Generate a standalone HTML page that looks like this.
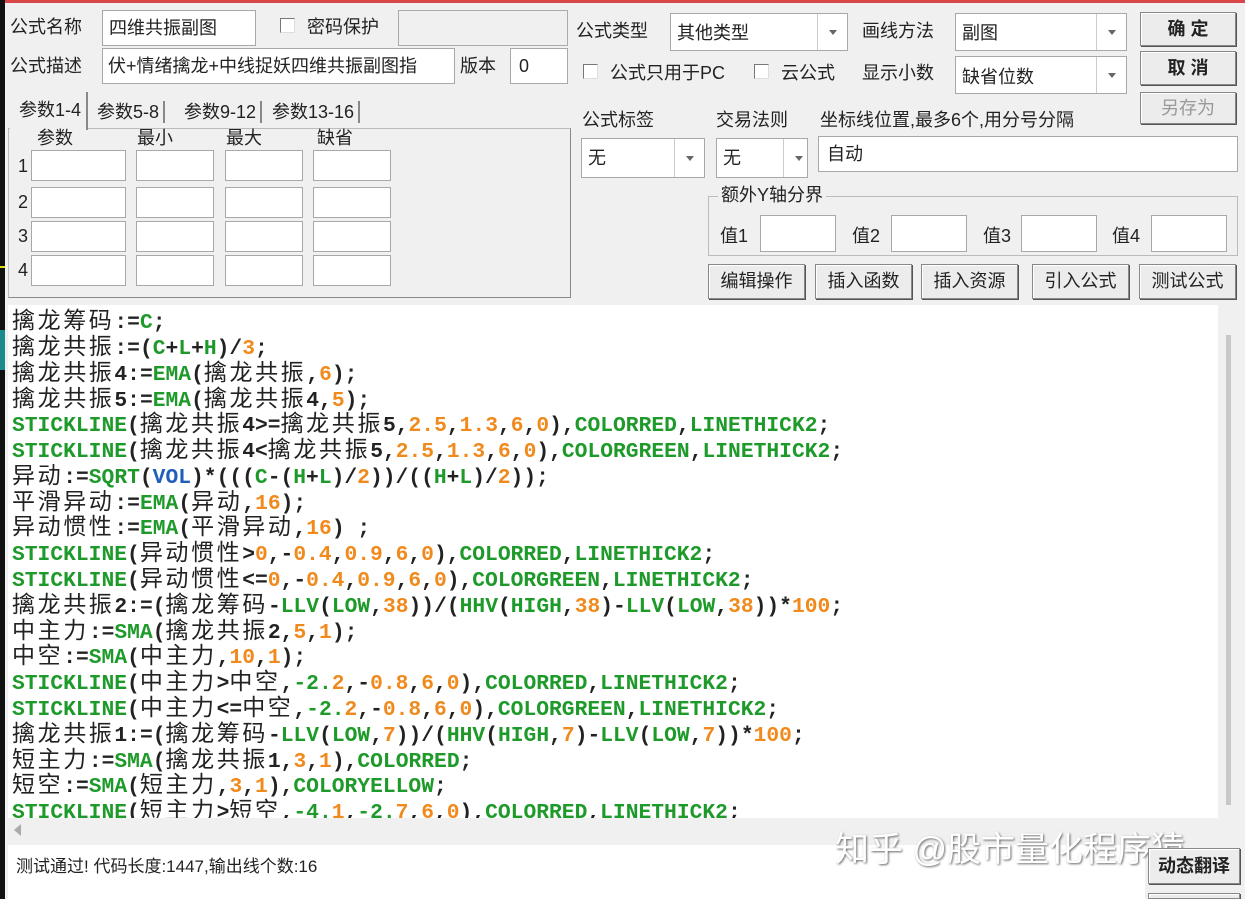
<!DOCTYPE html>
<html><head><meta charset="utf-8"><style>
*{margin:0;padding:0;box-sizing:border-box}
html,body{width:1245px;height:899px;overflow:hidden}
body{background:#f0f0f0;position:relative;font-family:"Liberation Sans","Noto Sans CJK SC",sans-serif;font-size:18px;color:#222}
.a{position:absolute}
.in{position:absolute;background:#fff;border:1px solid #a8a8a8;}
.lbl{position:absolute;font-size:18px;line-height:22px;white-space:nowrap}
.cb{position:absolute;width:15px;height:15px;background:#fff;border:1px solid #777;border-right-color:#ddd;border-bottom-color:#ddd}
.dd{position:absolute;right:0;top:0;bottom:0;width:30px;border-left:1px solid #ccc;}
.dd:after{content:"";position:absolute;left:11px;top:50%;margin-top:-2px;border:4px solid transparent;border-top:5px solid #666;}
.btn{position:absolute;background:#ececec;border:1px solid #888;box-shadow:inset 1px 1px #fff,1px 1px #555;text-align:center;font-size:18px}
#code{position:absolute;left:8px;top:305px;width:1210px;height:513px;background:#fff;overflow:hidden}
.l{position:absolute;left:4px;height:26px;line-height:26px;white-space:pre;font-family:"Liberation Mono",monospace;font-weight:bold;font-size:21.3px;color:#222}
.l i{font-style:normal;font-weight:normal;font-family:"Noto Sans CJK SC",sans-serif;font-size:23px;letter-spacing:2.6px;color:#222}
.g{color:#1e9a2a}.o{color:#f08a1c}.b{color:#1f5fb8}
</style></head><body>
<div class="a" style="left:0;top:0;width:1245px;height:3px;background:#d8464a"></div>
<div class="a" style="left:0;top:0;width:5px;height:899px;background:#111"></div>
<div class="a" style="left:0;top:330px;width:5px;height:40px;background:#1a8a8a"></div>
<div class="a" style="left:0;top:266px;width:5px;height:2px;background:#dd0"></div>

<div class="lbl" style="left:10px;top:16px">公式名称</div>
<div class="in" style="left:102px;top:10px;width:154px;height:36px"><span class="lbl" style="left:6px;top:6px">四维共振副图</span></div>
<div class="cb" style="left:280px;top:18px"></div>
<div class="lbl" style="left:307px;top:16px">密码保护</div>
<div class="a" style="left:398px;top:10px;width:170px;height:36px;border:1px solid #aaa;background:#f0f0f0"></div>
<div class="lbl" style="left:10px;top:55px">公式描述</div>
<div class="in" style="left:102px;top:48px;width:353px;height:36px;overflow:hidden"><span class="lbl" style="left:5px;top:6px">伏+情绪擒龙+中线捉妖四维共振副图指</span></div>
<div class="lbl" style="left:460px;top:55px">版本</div>
<div class="in" style="left:510px;top:48px;width:58px;height:36px"><span class="lbl" style="left:8px;top:6px">0</span></div>

<div class="a" style="left:8px;top:128px;width:563px;height:170px;border:1px solid #bbb;border-right-color:#888;border-bottom-color:#888"></div>
<div class="a" style="left:10px;top:92px;width:78px;height:38px;background:#f0f0f0;border-right:2px solid #888"></div>
<div class="lbl" style="left:19px;top:99px">参数1-4</div>
<div class="lbl" style="left:97px;top:101px;border-right:2px solid #888;padding-right:4px">参数5-8</div>
<div class="lbl" style="left:174px;top:101px;border-right:2px solid #888;padding-right:4px;padding-left:10px">参数9-12</div>
<div class="lbl" style="left:260px;top:101px;border-right:2px solid #888;padding-right:4px;padding-left:12px">参数13-16</div>
<div class="lbl" style="left:37px;top:127px">参数</div>
<div class="lbl" style="left:137px;top:127px">最小</div>
<div class="lbl" style="left:226px;top:127px">最大</div>
<div class="lbl" style="left:317px;top:127px">缺省</div>
<div class="lbl" style="left:18px;top:155px">1</div><div class="lbl" style="left:18px;top:191px">2</div><div class="lbl" style="left:18px;top:225px">3</div><div class="lbl" style="left:18px;top:259px">4</div>
<div class="in" style="left:31px;top:150px;width:95px;height:31px"></div><div class="in" style="left:136px;top:150px;width:78px;height:31px"></div><div class="in" style="left:225px;top:150px;width:78px;height:31px"></div><div class="in" style="left:313px;top:150px;width:78px;height:31px"></div>
<div class="in" style="left:31px;top:187px;width:95px;height:31px"></div><div class="in" style="left:136px;top:187px;width:78px;height:31px"></div><div class="in" style="left:225px;top:187px;width:78px;height:31px"></div><div class="in" style="left:313px;top:187px;width:78px;height:31px"></div>
<div class="in" style="left:31px;top:221px;width:95px;height:31px"></div><div class="in" style="left:136px;top:221px;width:78px;height:31px"></div><div class="in" style="left:225px;top:221px;width:78px;height:31px"></div><div class="in" style="left:313px;top:221px;width:78px;height:31px"></div>
<div class="in" style="left:31px;top:255px;width:95px;height:31px"></div><div class="in" style="left:136px;top:255px;width:78px;height:31px"></div><div class="in" style="left:225px;top:255px;width:78px;height:31px"></div><div class="in" style="left:313px;top:255px;width:78px;height:31px"></div>

<div class="lbl" style="left:576px;top:20px">公式类型</div>
<div class="in" style="left:670px;top:13px;width:178px;height:38px"><span class="lbl" style="left:6px;top:8px">其他类型</span><div class="dd"></div></div>
<div class="lbl" style="left:862px;top:20px">画线方法</div>
<div class="in" style="left:955px;top:13px;width:172px;height:38px"><span class="lbl" style="left:6px;top:8px">副图</span><div class="dd"></div></div>
<div class="cb" style="left:583px;top:64px"></div>
<div class="lbl" style="left:610px;top:62px">公式只用于PC</div>
<div class="cb" style="left:754px;top:64px"></div>
<div class="lbl" style="left:781px;top:62px">云公式</div>
<div class="lbl" style="left:862px;top:62px">显示小数</div>
<div class="in" style="left:955px;top:56px;width:172px;height:38px"><span class="lbl" style="left:6px;top:9px">缺省位数</span><div class="dd"></div></div>
<div class="btn" style="left:1140px;top:12px;width:96px;height:34px;line-height:32px;font-weight:bold">确 定</div>
<div class="btn" style="left:1140px;top:51px;width:96px;height:34px;line-height:32px;font-weight:bold">取 消</div>
<div class="btn" style="left:1140px;top:92px;width:96px;height:32px;line-height:30px;color:#999">另存为</div>

<div class="lbl" style="left:582px;top:109px">公式标签</div>
<div class="lbl" style="left:716px;top:109px">交易法则</div>
<div class="lbl" style="left:820px;top:109px">坐标线位置,最多6个,用分号分隔</div>
<div class="in" style="left:581px;top:138px;width:124px;height:40px"><span class="lbl" style="left:6px;top:8px">无</span><div class="dd"></div></div>
<div class="in" style="left:716px;top:138px;width:92px;height:40px"><span class="lbl" style="left:6px;top:8px">无</span><div class="dd" style="width:24px"></div></div>
<div class="in" style="left:818px;top:136px;width:420px;height:36px"><span class="lbl" style="left:8px;top:6px">自动</span></div>
<div class="a" style="left:708px;top:196px;width:530px;height:60px;border:1px solid #bbb"></div>
<div class="lbl" style="left:718px;top:184px;background:#f0f0f0;padding:0 3px">额外Y轴分界</div>
<div class="lbl" style="left:720px;top:225px">值1</div><div class="in" style="left:760px;top:215px;width:76px;height:37px"></div>
<div class="lbl" style="left:852px;top:225px">值2</div><div class="in" style="left:891px;top:215px;width:76px;height:37px"></div>
<div class="lbl" style="left:983px;top:225px">值3</div><div class="in" style="left:1021px;top:215px;width:76px;height:37px"></div>
<div class="lbl" style="left:1112px;top:225px">值4</div><div class="in" style="left:1151px;top:215px;width:76px;height:37px"></div>
<div class="btn" style="left:708px;top:264px;width:97px;height:35px;line-height:33px">编辑操作</div>
<div class="btn" style="left:815px;top:264px;width:97px;height:35px;line-height:33px">插入函数</div>
<div class="btn" style="left:921px;top:264px;width:97px;height:35px;line-height:33px">插入资源</div>
<div class="btn" style="left:1032px;top:264px;width:97px;height:35px;line-height:33px">引入公式</div>
<div class="btn" style="left:1139px;top:264px;width:97px;height:35px;line-height:33px">测试公式</div>

<div id="code">
<div class="l" style="top:0px"><i>擒龙筹码</i>:=<span class="g">C</span>;</div>
<div class="l" style="top:26px"><i>擒龙共振</i>:=(<span class="g">C</span>+<span class="g">L</span>+<span class="g">H</span>)/<span class="o">3</span>;</div>
<div class="l" style="top:52px"><i>擒龙共振</i>4:=<span class="g">EMA</span>(<i>擒龙共振</i>,<span class="o">6</span>);</div>
<div class="l" style="top:78px"><i>擒龙共振</i>5:=<span class="g">EMA</span>(<i>擒龙共振</i>4,<span class="o">5</span>);</div>
<div class="l" style="top:103px"><span class="g">STICKLINE</span>(<i>擒龙共振</i>4&gt;=<i>擒龙共振</i>5,<span class="o">2.5</span>,<span class="o">1.3</span>,<span class="o">6</span>,<span class="o">0</span>),<span class="g">COLORRED</span>,<span class="g">LINETHICK2</span>;</div>
<div class="l" style="top:129px"><span class="g">STICKLINE</span>(<i>擒龙共振</i>4&lt;<i>擒龙共振</i>5,<span class="o">2.5</span>,<span class="o">1.3</span>,<span class="o">6</span>,<span class="o">0</span>),<span class="g">COLORGREEN</span>,<span class="g">LINETHICK2</span>;</div>
<div class="l" style="top:155px"><i>异动</i>:=<span class="g">SQRT</span>(<span class="b">VOL</span>)*(((<span class="g">C</span>-(<span class="g">H</span>+<span class="g">L</span>)/<span class="o">2</span>))/((<span class="g">H</span>+<span class="g">L</span>)/<span class="o">2</span>));</div>
<div class="l" style="top:181px"><i>平滑异动</i>:=<span class="g">EMA</span>(<i>异动</i>,<span class="o">16</span>);</div>
<div class="l" style="top:206px"><i>异动惯性</i>:=<span class="g">EMA</span>(<i>平滑异动</i>,<span class="o">16</span>) ;</div>
<div class="l" style="top:232px"><span class="g">STICKLINE</span>(<i>异动惯性</i>&gt;<span class="o">0</span>,-<span class="o">0.4</span>,<span class="o">0.9</span>,<span class="o">6</span>,<span class="o">0</span>),<span class="g">COLORRED</span>,<span class="g">LINETHICK2</span>;</div>
<div class="l" style="top:258px"><span class="g">STICKLINE</span>(<i>异动惯性</i>&lt;=<span class="o">0</span>,-<span class="o">0.4</span>,<span class="o">0.9</span>,<span class="o">6</span>,<span class="o">0</span>),<span class="g">COLORGREEN</span>,<span class="g">LINETHICK2</span>;</div>
<div class="l" style="top:284px"><i>擒龙共振</i>2:=(<i>擒龙筹码</i>-<span class="g">LLV</span>(<span class="g">LOW</span>,<span class="o">38</span>))/(<span class="g">HHV</span>(<span class="g">HIGH</span>,<span class="o">38</span>)-<span class="g">LLV</span>(<span class="g">LOW</span>,<span class="o">38</span>))*<span class="o">100</span>;</div>
<div class="l" style="top:310px"><i>中主力</i>:=<span class="g">SMA</span>(<i>擒龙共振</i>2,<span class="o">5</span>,<span class="o">1</span>);</div>
<div class="l" style="top:335px"><i>中空</i>:=<span class="g">SMA</span>(<i>中主力</i>,<span class="o">10</span>,<span class="o">1</span>);</div>
<div class="l" style="top:361px"><span class="g">STICKLINE</span>(<i>中主力</i>&gt;<i>中空</i>,<span class="g">-2.</span><span class="o">2</span>,-<span class="o">0.8</span>,<span class="o">6</span>,<span class="o">0</span>),<span class="g">COLORRED</span>,<span class="g">LINETHICK2</span>;</div>
<div class="l" style="top:387px"><span class="g">STICKLINE</span>(<i>中主力</i>&lt;=<i>中空</i>,<span class="g">-2.</span><span class="o">2</span>,-<span class="o">0.8</span>,<span class="o">6</span>,<span class="o">0</span>),<span class="g">COLORGREEN</span>,<span class="g">LINETHICK2</span>;</div>
<div class="l" style="top:413px"><i>擒龙共振</i>1:=(<i>擒龙筹码</i>-<span class="g">LLV</span>(<span class="g">LOW</span>,<span class="o">7</span>))/(<span class="g">HHV</span>(<span class="g">HIGH</span>,<span class="o">7</span>)-<span class="g">LLV</span>(<span class="g">LOW</span>,<span class="o">7</span>))*<span class="o">100</span>;</div>
<div class="l" style="top:439px"><i>短主力</i>:=<span class="g">SMA</span>(<i>擒龙共振</i>1,<span class="o">3</span>,<span class="o">1</span>),<span class="g">COLORRED</span>;</div>
<div class="l" style="top:464px"><i>短空</i>:=<span class="g">SMA</span>(<i>短主力</i>,<span class="o">3</span>,<span class="o">1</span>),<span class="g">COLORYELLOW</span>;</div>
<div class="l" style="top:490px"><span class="g">STICKLINE</span>(<i>短主力</i>&gt;<i>短空</i>,<span class="g">-4.</span><span class="o">1</span>,<span class="g">-2.</span><span class="o">7</span>,<span class="o">6</span>,<span class="o">0</span>),<span class="g">COLORRED</span>,<span class="g">LINETHICK2</span>;</div>
</div>
<div class="a" style="left:1218px;top:305px;width:22px;height:513px;background:#f0f0f0"></div>
<div class="a" style="left:1226px;top:335px;width:5px;height:470px;background:#c8c8c8"></div>
<div class="a" style="left:8px;top:818px;width:1232px;height:24px;background:#f0f0f0"></div>
<div class="a" style="left:14px;top:824px;border:6px solid transparent;border-right:7px solid #aaa;border-left:0"></div>
<div class="a" style="left:8px;top:845px;width:1137px;height:54px;background:#fff"></div>
<div class="lbl" style="left:16px;top:856px;font-size:17px">测试通过! 代码长度:1447,输出线个数:16</div>
<div class="lbl" style="left:835px;top:828px;font-size:34px;line-height:44px;color:#fff;text-shadow:1px 1px 2px #666">知乎 @股市量化程序猿</div>
<div class="btn" style="left:1148px;top:848px;width:92px;height:36px;line-height:34px;font-weight:bold">动态翻译</div>
<div class="btn" style="left:1148px;top:893px;width:92px;height:6px"></div>
</body></html>
